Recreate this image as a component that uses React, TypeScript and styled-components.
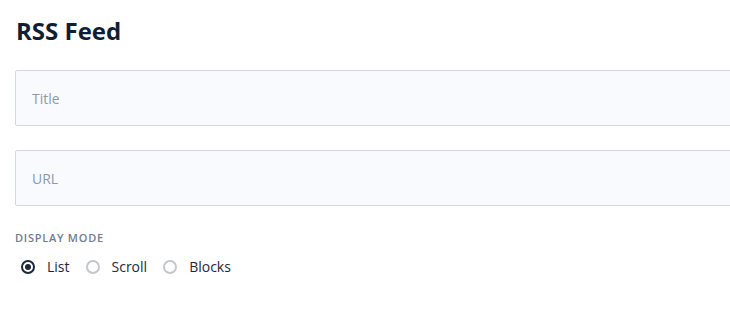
import React, { useState } from 'react';
import styled, { createGlobalStyle } from 'styled-components';

const GlobalStyle = createGlobalStyle`
  body {
    margin: 0;
    background: #fff;
    font-family: "Open Sans", "Noto Sans", sans-serif;
    overflow: hidden;
  }
`;

const Panel = styled.div`
  padding: 16px 0 0 15px;
  overflow: hidden;
`;

const Heading = styled.h2`
  margin: 0 0 24px 1px;
  font-size: 24px;
  font-weight: 700;
  line-height: 30px;
  color: #0f1e33;
`;

const Input = styled.input`
  display: block;
  box-sizing: border-box;
  width: calc(100% + 30px);
  height: 56px;
  margin-bottom: 24px;
  padding: 0 16px;
  border: 1px solid #d3d8de;
  border-radius: 2px;
  background: #f9fafd;
  font-family: "Open Sans", sans-serif;
  font-size: 14px;
  color: #0f1e33;
  outline: none;
  &::placeholder {
    color: #8e99a7;
  }
`;

const Label = styled.div`
  margin-top: 1px;
  font-size: 11px;
  font-weight: 600;
  line-height: 16px;
  letter-spacing: 0.75px;
  text-transform: uppercase;
  color: #6f7c8c;
`;

const RadioRow = styled.div`
  display: flex;
  align-items: center;
  gap: 16px;
  margin-top: 11px;
  padding-left: 6px;
`;

const Option = styled.label`
  display: flex;
  align-items: center;
  gap: 12px;
  font-size: 14px;
  line-height: 20px;
  color: #1c2838;
  cursor: pointer;
`;

const Circle = styled.span<{ $on: boolean }>`
  box-sizing: border-box;
  width: 14px;
  height: 14px;
  border-radius: 50%;
  border: 2px solid ${p => (p.$on ? '#1c2838' : '#c3c8ce')};
  display: flex;
  align-items: center;
  justify-content: center;
  &::after {
    content: '';
    width: 6px;
    height: 6px;
    border-radius: 50%;
    background: #1c2838;
    display: ${p => (p.$on ? 'block' : 'none')};
  }
`;

const modes = ['List', 'Scroll', 'Blocks'];

export default function App() {
  const [mode, setMode] = useState('List');
  return (
    <>
      <GlobalStyle />
      <Panel>
        <Heading>RSS Feed</Heading>
        <Input placeholder="Title" />
        <Input placeholder="URL" />
        <Label>Display mode</Label>
        <RadioRow>
          {modes.map(m => (
            <Option key={m} onClick={() => setMode(m)}>
              <Circle $on={mode === m} />
              {m}
            </Option>
          ))}
        </RadioRow>
      </Panel>
    </>
  );
}
